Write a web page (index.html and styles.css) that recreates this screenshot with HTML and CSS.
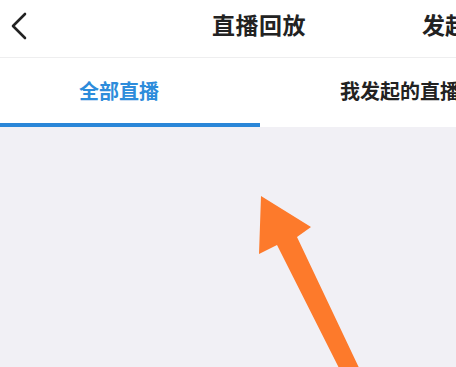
FILE: index.html
```html
<!DOCTYPE html>
<html lang="zh">
<head>
<meta charset="utf-8">
<link rel="stylesheet" href="styles.css">
</head>
<body>
<div class="page">
  <header class="topbar">
    <svg class="back" width="18" height="30" viewBox="0 0 18 30"><polyline points="15,2 3,14 15,26" fill="none" stroke="#222" stroke-width="2.6" stroke-linecap="round" stroke-linejoin="round"/></svg>
    <div class="title">直播回放</div>
    <div class="action">发起</div>
  </header>
  <nav class="tabs">
    <div class="tab active">全部直播</div>
    <div class="tab">我发起的直播</div>
  </nav>
  <main class="content"></main>
  <svg class="arrow" width="456" height="367" viewBox="0 0 456 367">
    <polygon points="261,196 311,227 297,237 361,372 341,372 277,245 259,254" fill="#fd7a2b"/>
  </svg>
</div>
</body>
</html>
```
FILE: styles.css
```css
html, body {
  margin: 0;
  padding: 0;
}
body {
  font-family: "Noto Sans CJK SC", "Noto Sans", sans-serif;
  background: #f1f0f5;
}
.page {
  position: relative;
  width: 456px;
  height: 367px;
  overflow: hidden;
  display: flex;
  flex-direction: column;
}
.topbar {
  height: 58px;
  box-sizing: border-box;
  padding-bottom: 9px;
  flex: none;
  background: #fff;
  border-bottom: 1px solid #eeeeef;
  display: flex;
  align-items: center;
  white-space: nowrap;
  overflow: hidden;
}
.back {
  margin-left: 10px;
  margin-top: 6px;
  flex: none;
}
.title {
  margin-left: 184px;
  font-size: 23px;
  font-weight: 700;
  color: #222;
  letter-spacing: 0.5px;
  flex: none;
}
.action {
  margin-left: 116px;
  font-size: 23px;
  font-weight: 700;
  color: #222;
  flex: none;
}
.tabs {
  height: 69px;
  flex: none;
  background: #fff;
  display: flex;
  white-space: nowrap;
  overflow: hidden;
}
.tab {
  flex: none;
  font-size: 20px;
  font-weight: 700;
  color: #222;
  padding-top: 18px;
  box-sizing: border-box;
  height: 69px;
}
.tab.active {
  width: 260px;
  padding-left: 79px;
  color: #2d8cdb;
  border-bottom: 4px solid #2a86d8;
}
.tab + .tab {
  padding-left: 80px;
}
.content {
  flex: 1;
  background: #f1f0f5;
}
.arrow {
  position: absolute;
  left: 0;
  top: 0;
}
```
